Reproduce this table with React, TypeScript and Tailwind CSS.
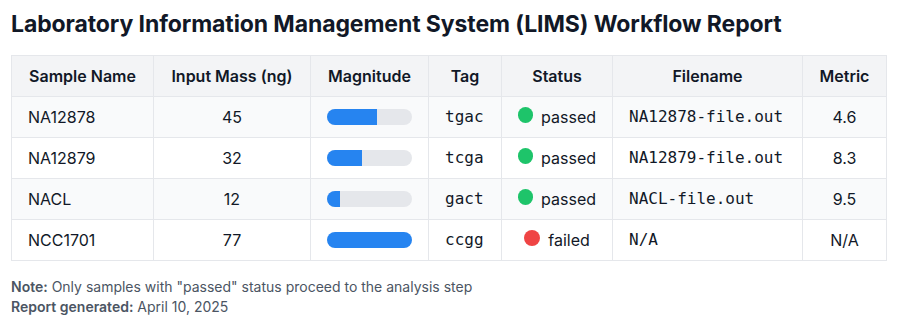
import React from "react";

type Row = {
  name: string;
  mass: number;
  tag: string;
  status: "passed" | "failed";
  file: string;
  metric: string;
};

const rows: Row[] = [
  { name: "NA12878", mass: 45, tag: "tgac", status: "passed", file: "NA12878-file.out", metric: "4.6" },
  { name: "NA12879", mass: 32, tag: "tcga", status: "passed", file: "NA12879-file.out", metric: "8.3" },
  { name: "NACL", mass: 12, tag: "gact", status: "passed", file: "NACL-file.out", metric: "9.5" },
  { name: "NCC1701", mass: 77, tag: "ccgg", status: "failed", file: "N/A", metric: "N/A" },
];

const maxMass = 77;

const mono = { fontFamily: '"DejaVu Sans Mono", "Liberation Mono", monospace' };

export default function App() {
  return (
    <div
      className="bg-white px-[11px] pt-[8px] pb-4 text-[#111827]"
      style={{ fontFamily: 'Inter, "Noto Sans", "Liberation Sans", sans-serif' }}
    >
      <h1 className="text-[23px] leading-8 font-bold tracking-[-0.1px] text-[#111827] mb-[15px]">
        Laboratory Information Management System (LIMS) Workflow Report
      </h1>
      <table className="w-[876px] table-fixed border-collapse border border-[#e5e7eb] text-base leading-6">
        <thead>
          <tr className="bg-[#f3f4f6]">
            <th className="w-[142px] border border-[#e5e7eb] px-4 py-2 font-semibold text-center">Sample Name</th>
            <th className="w-[157px] border border-[#e5e7eb] px-4 py-2 font-semibold text-center">Input Mass (ng)</th>
            <th className="w-[118px] border border-[#e5e7eb] px-4 py-2 font-semibold text-center">Magnitude</th>
            <th className="w-[73px] border border-[#e5e7eb] px-4 py-2 font-semibold text-center">Tag</th>
            <th className="w-[111px] border border-[#e5e7eb] px-4 py-2 font-semibold text-center">Status</th>
            <th className="w-[190px] border border-[#e5e7eb] px-4 py-2 font-semibold text-center">Filename</th>
            <th className="border border-[#e5e7eb] px-4 py-2 font-semibold text-center">Metric</th>
          </tr>
        </thead>
        <tbody>
          {rows.map((r, i) => (
            <tr key={r.name} className={i % 2 === 0 ? "bg-[#f9fafb]" : "bg-white"}>
              <td className="border border-[#e5e7eb] px-4 py-2 text-left">{r.name}</td>
              <td className="border border-[#e5e7eb] px-4 py-2 text-center">{r.mass}</td>
              <td className="border border-[#e5e7eb] px-4 py-2">
                <div className="h-4 w-full rounded-full bg-[#e5e7eb] overflow-hidden">
                  <div
                    className="h-full bg-[#2684f0]"
                    style={{ width: `${(r.mass / maxMass) * 100}%` }}
                  />
                </div>
              </td>
              <td className="border border-[#e5e7eb] px-4 py-2 text-left" style={mono}>
                {r.tag}
              </td>
              <td className="border border-[#e5e7eb] px-4 py-2">
                <div className="flex items-center justify-center gap-2">
                  <span
                    className={`inline-block h-4 w-4 rounded-full mb-[4px] ${
                      r.status === "passed" ? "bg-[#1ec46a]" : "bg-[#ef4444]"
                    }`}
                  />
                  <span>{r.status}</span>
                </div>
              </td>
              <td className="border border-[#e5e7eb] px-4 py-2 text-left" style={mono}>
                {r.file}
              </td>
              <td className="border border-[#e5e7eb] px-4 py-2 text-center">{r.metric}</td>
            </tr>
          ))}
        </tbody>
      </table>
      <div className="mt-4 text-sm leading-5 text-[#4b5563]">
        <p>
          <span className="font-semibold">Note:</span> Only samples with "passed" status proceed to the analysis step
        </p>
        <p>
          <span className="font-semibold">Report generated:</span> April 10, 2025
        </p>
      </div>
    </div>
  );
}
